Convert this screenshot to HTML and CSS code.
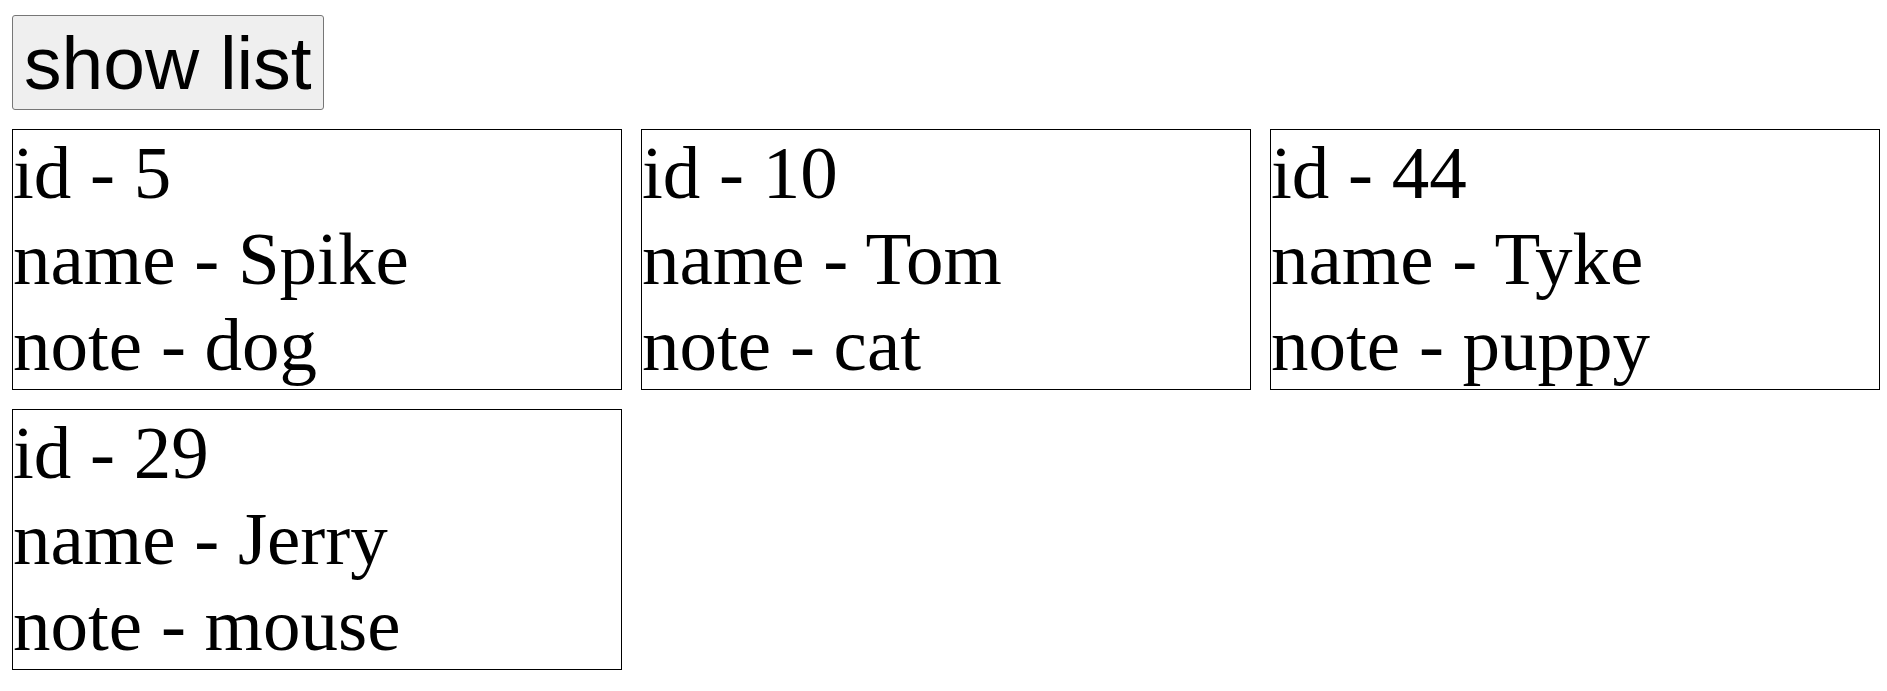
FILE: index.html
```html
<!DOCTYPE html>
<html lang="en">
<head>
    <meta charset="UTF-8">
    <title>list</title>
    <link rel="stylesheet" href="styles.css">
</head>
<body>
<button id="show" class="show-btn" onclick="showList()">show list</button>
<div id="list" class="list"></div>
<script>
    const items = [
        {id: 5, name: 'Spike', note: 'dog'},
        {id: 10, name: 'Tom', note: 'cat'},
        {id: 44, name: 'Tyke', note: 'puppy'},
        {id: 29, name: 'Jerry', note: 'mouse'}
    ];

    const list = document.getElementById('list');

    function showList() {
        list.innerHTML = '';

        for (let item of items) {
            const card = document.createElement('div');
            card.className = 'item';

            for (let key of ['id', 'name', 'note']) {
                const row = document.createElement('div');
                row.innerText = `${key} - ${item[key]}`;
                card.appendChild(row);
            }

            list.appendChild(card);
        }
    }

    showList();
</script>
</body>
</html>
```

FILE: styles.css
```css
body {
    margin: 12px 0 0 12px;

    font-family: "Liberation Serif", "Times New Roman", serif;
}

.show-btn {
    font-family: "Liberation Sans", Arial, sans-serif;
    font-size: 75px;

    display: block;

    margin-top: 3px;
    padding: 4px 11px 3px;

    color: #000;
    border: 1px solid #767676;
    border-radius: 3px;
    background-color: #efefef;
}

.list {
    display: grid;
    grid-template-columns: repeat(3, 610px);
    gap: 19px;

    margin-top: 19px;
}

.item {
    font-size: 75px;

    box-sizing: border-box;
    height: 261px;

    border: 1px solid #000;
}
```
